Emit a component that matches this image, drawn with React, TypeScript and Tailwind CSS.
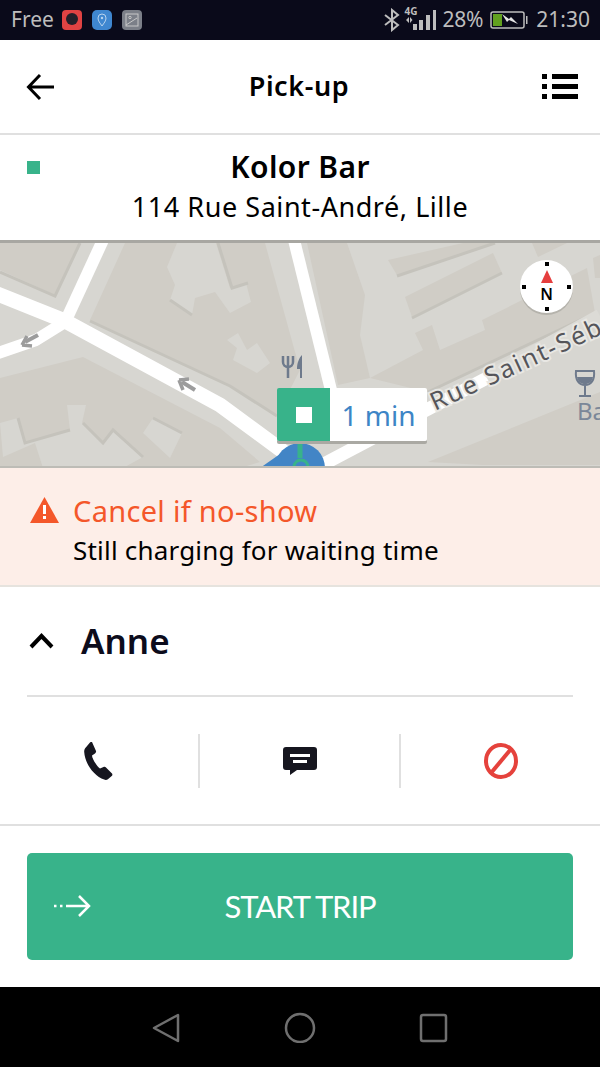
function StatusBar() {
  return (
    <div className="h-10 bg-[#0a0a1a] flex items-center justify-between pl-[11px] pr-[10px] text-[#bdbdbd] text-[21px] font-['Noto_Sans',sans-serif]">
      <div className="flex items-center">
        <span className="w-[42px]">Free</span>
        <svg width="20" height="20" viewBox="0 0 20 20" className="ml-[9px]">
          <rect width="20" height="20" rx="4" fill="#e04343" />
          <circle cx="10" cy="9" r="6" fill="#23202a" />
        </svg>
        <svg width="20" height="20" viewBox="0 0 20 20" className="ml-[10px]">
          <rect width="20" height="20" rx="5" fill="#3f87d0" />
          <path d="M10 16c-2-3-4-5-4-8a4 4 0 0 1 8 0c0 3-2 5-4 8z" fill="none" stroke="#b9d4ee" strokeWidth="1" />
          <circle cx="10" cy="8" r="1.2" fill="#b9d4ee" />
        </svg>
        <svg width="20" height="20" viewBox="0 0 20 20" className="ml-[10px]">
          <rect width="20" height="20" rx="4" fill="#7b7f88" />
          <rect x="4" y="4" width="12" height="12" fill="none" stroke="#c8c8c8" strokeWidth="1" />
          <path d="M4 15L15 8" stroke="#c8c8c8" strokeWidth="1" />
          <circle cx="8" cy="7.5" r="1.2" fill="none" stroke="#c8c8c8" />
        </svg>
      </div>
      <div className="flex items-center">
        <svg width="16" height="24" viewBox="0 0 16 24" fill="none" stroke="#bdbdbd" strokeWidth="2">
          <path d="M1 7l13 10-6 5V2l6 5L1 17" />
        </svg>
        <div className="relative w-[32px] h-[24px] ml-[4px]">
          <span className="absolute left-0 -top-[2px] text-[10px] font-bold leading-[11px]">4G</span>
          <svg width="32" height="24" viewBox="0 0 32 24" fill="#bdbdbd" className="absolute inset-0">
            <path d="M5 9l-3 3 3 3zM6 9v6l2.500-3zM9 16h4v6H9zM15 12h4v10h-4zM22 7h4v15h-4zM29 2h3v20h-3z" />
          </svg>
        </div>
        <span className="ml-[6px] tracking-[-0.2px]">28%</span>
        <svg width="38" height="20" viewBox="0 0 38 20" className="ml-[7px]">
          <rect x="1" y="2" width="33" height="16" rx="2" fill="none" stroke="#bdbdbd" strokeWidth="1.5" />
          <rect x="36" y="6" width="1.5" height="8" fill="#bdbdbd" />
          <rect x="3" y="4" width="9" height="12" fill="#62a11f" />
          <path d="M12 4l7 5 2-2 7 7-9-4-2 2z" fill="#e5e5e5" />
        </svg>
        <span className="ml-[8px]">21:30</span>
      </div>
    </div>
  );
}

function MapArea() {
  return (
    <div className="relative h-[228px] bg-[#d7d6d1] overflow-hidden">
      <svg width="600" height="228" viewBox="0 0 600 228" className="absolute inset-0">
        {/* darker blocks */}
        <g fill="#d0cdc6">
          <path d="M0 3h80L55 55 0 30z" />
          <path d="M125 3L90 80l140 65 47 30 23-45-35-127z" />
          <path d="M0 138l83-21 137 71 40 34-20 6H0z" />
          <path d="M307 3h40l18 52-5 40 10 43-32 7z" />
          <path d="M388 20l75-17h32L397 35z" />
          <path d="M405 57l88-44 9 20-90 44z" />
          <path d="M415 93l17-8 8 25 45-20-3-10 105-52 8 45-168 79-57-14 53-28z" />
          <path d="M428 222l172-70v73H483z" />
          <path d="M593 18l7-3v23h-5z" />
          <path d="M532 3h35l-29 14z" />
        </g>
        {/* lighter buildings */}
        <g fill="#d7d6d1">
          <path d="M177 3l-10 24 8 18-5 15 22 15 3-17 20-6 15 21 21-11-5-19-16 5-14-45z" />
          <path d="M227 100l11-7 9 17 10-7 13 20-13 10-24-13 4-12z" />
          <path d="M0 183l18-5 7 25 45-13-3-25h19l-4 18 21 20 10-13 30 27-20 11H43l-8-25-32 14z" />
          <path d="M143 193l10-15 29 15-12 25z" />
        </g>
        {/* building shadows */}
        <g fill="none" stroke="#c5c3bc" strokeWidth="3">
          <path d="M0 32l55 24L80 3" />
          <path d="M90 81l140 65 47 30" />
          <path d="M18 178l7 25 45-13" />
          <path d="M83 183l20 20 10-13 30 27" />
          <path d="M153 178l29 15" />
          <path d="M397 36l98-33" />
          <path d="M412 78l90-45" />
          <path d="M218 3l14 45 16-5" />
          <path d="M170 60l22 15" />
          <path d="M428 152l167-79" />
        </g>
        {/* roads */}
        <g fill="none" stroke="#ffffff" strokeLinejoin="round">
          <path d="M-5 53L65 81 220 165 292 218" strokeWidth="15" />
          <path d="M67 78L103 0" strokeWidth="12" />
          <path d="M65 82L36 100-5 114" strokeWidth="12" />
          <path d="M294 0L331 150" strokeWidth="12" />
          <path d="M600 76L487 138" strokeWidth="14" stroke="#dcdbd6" />
          <path d="M320 226L487 138" strokeWidth="13" />
        </g>
        {/* one-way arrows */}
        <g fill="none" stroke="#9c9c9c" strokeWidth="4">
          <path d="M38 95L25 102" />
          <path d="M22 105l10 1M22 105l5-9" strokeWidth="3.5" />
          <path d="M195 150l-13-8" />
          <path d="M179 140l4 10M179 140l10-1" strokeWidth="3.5" />
        </g>
        {/* restaurant */}
        <g fill="none" stroke="#6e7a8c" strokeWidth="2.5">
          <path d="M288 116v22M283 116v6a5 5 0 0 0 10 0v-6" />
        </g>
        <path d="M300 138v-9h-3c0-6 2-11 5-14v23z" fill="#6e7a8c" />
        {/* bar */}
        <g fill="none" stroke="#6e7a8c" strokeWidth="2">
          <path d="M576 131h18c1 9-3 14-9 14s-10-5-9-14zM585 145v11M579 156h12" />
        </g>
        <path d="M577 137h16c-1 5-4 7-8 7s-7-2-8-7z" fill="#6e7a8c" />
        <text x="577" y="180" fontSize="24" fill="#7b8798" fontFamily="'Noto Sans', sans-serif">Ba</text>
        <text
          x="435"
          y="171"
          fontSize="25"
          fill="#55555a"
          stroke="#e8e7e3"
          strokeWidth="4"
          paintOrder="stroke"
          letterSpacing="2"
          fontFamily="'Noto Sans', sans-serif"
          transform="rotate(-24.7 435 171)"
        >
          Rue Saint-Séb
        </text>
        {/* driver */}
        <circle cx="300" cy="228" r="25" fill="#4285c6" />
        <path d="M260 228l20-14 4 14z" fill="#4285c6" />
        <path d="M300 200v18" stroke="#38b38a" strokeWidth="5" />
        <circle cx="301" cy="227" r="7" fill="none" stroke="#38b38a" strokeWidth="3" />
      </svg>
      <div className="absolute inset-x-0 top-0 h-[3px] bg-[#a8a7a2]" />
      <div className="absolute inset-x-0 bottom-0 h-[2px] bg-[#bdbcb6]" />
      <div className="absolute left-[520px] top-[20px] w-[53px] h-[53px] rounded-full bg-white shadow-[0_2px_0_#b5b3ac]">
        <span className="absolute left-[25px] top-[2px] w-[4px] h-[4px] bg-black" />
        <span className="absolute left-[25px] bottom-[2px] w-[4px] h-[4px] bg-black" />
        <span className="absolute left-[2px] top-[25px] w-[4px] h-[4px] bg-black" />
        <span className="absolute right-[2px] top-[25px] w-[4px] h-[4px] bg-black" />
        <svg width="14" height="14" viewBox="0 0 14 14" className="absolute left-[20px] top-[10px]">
          <path d="M7 0l6 13H1z" fill="#e53e3e" />
        </svg>
        <span className="absolute left-0 right-0 top-[25px] text-center text-[16px] leading-[18px] font-semibold text-black font-['Noto_Sans',sans-serif]">N</span>
      </div>
      <div className="absolute left-[277px] top-[148px] flex h-[53px] rounded-[2px] shadow-[0_3px_0_#aaa9a3]">
        <div className="w-[53px] bg-[#38b38a] rounded-l-[2px] flex items-center justify-center">
          <div className="w-[16px] h-[16px] bg-white" />
        </div>
        <div className="w-[97px] bg-white rounded-r-[2px] flex items-center justify-center text-[28px] text-[#3d85c6] font-['Noto_Sans',sans-serif]">
          1 min
        </div>
      </div>
    </div>
  );
}

export default function App() {
  return (
    <div className="w-[600px] h-[1067px] bg-white flex flex-col overflow-hidden font-['Noto_Sans',sans-serif] text-[#0c0c1c]">
      <StatusBar />

      <div className="h-[95px] flex items-center justify-between pl-[26px] pr-[22px] border-b-2 border-[#e0e0e0]">
        <svg width="30" height="28" viewBox="0 0 30 28" fill="none" stroke="#000" strokeWidth="3">
          <path d="M28 14H3M14 2L2.500 14 14 26" />
        </svg>
        <span className="text-[27px] tracking-[0.6px] font-semibold text-black">Pick-up</span>
        <svg width="36" height="25" viewBox="0 0 36 25" fill="#000">
          <rect x="0" y="0" width="5" height="5" />
          <rect x="10" y="0" width="26" height="5" />
          <rect x="0" y="10" width="5" height="5" />
          <rect x="10" y="10" width="26" height="5" />
          <rect x="0" y="20" width="5" height="5" />
          <rect x="10" y="20" width="26" height="5" />
        </svg>
      </div>

      <div className="relative h-[105px] flex flex-col items-center pt-[11px]">
        <span className="absolute left-[27px] top-[26px] w-[13px] h-[13px] bg-[#38b38a]" />
        <span className="text-[30px] leading-[42px] tracking-[0.4px] font-semibold text-black">Kolor Bar</span>
        <span className="text-[27px] leading-[38px] tracking-[0.55px] text-black">114 Rue Saint-André, Lille</span>
      </div>

      <MapArea />

      <div className="h-[119px] bg-[#fdeee8] border-b-2 border-[#e6e3de] pl-[30px] flex items-center gap-[15px]">
        <svg width="29" height="26" viewBox="0 0 29 26" className="-mt-[34px]">
          <path d="M14.5 0L29 26H0z" fill="#f4572a" />
          <rect x="13" y="8" width="3" height="9" fill="#fff" />
          <rect x="13" y="19" width="3" height="3" fill="#fff" />
        </svg>
        <div className="flex flex-col pt-[4px] -ml-[1px]">
          <span className="text-[29px] leading-[42px] tracking-[0.3px] text-[#f4572a]">Cancel if no-show</span>
          <span className="text-[26px] leading-[36px] tracking-[0.2px] text-black">Still charging for waiting time</span>
        </div>
      </div>

      <div className="h-[110px] mx-[27px] flex items-center gap-[26px] border-b-2 border-[#e0e0e0]">
        <svg width="27" height="18" viewBox="0 0 27 18" fill="none" stroke="#000" strokeWidth="4" className="ml-px">
          <path d="M3 15L13.500 4 24 15" />
        </svg>
        <span className="text-[35px] font-semibold text-[#0c0c1c]">Anne</span>
      </div>

      <div className="h-[129px] flex items-start pt-[37px] border-b-2 border-[#e0e0e0]">
        <div className="w-[200px] h-[54px] flex items-center justify-center border-r-2 border-[#e0e0e0]">
          <svg width="32" height="38" viewBox="0 0 32 38" fill="#16161f">
            <path d="M9 0l4 9c.3 1-.2 2-1 2.500l-3 2c0 3 5 11 8 13l3.500-1.500c1-.4 2-.2 2.500.6l6 6c.6.8.5 1.700-.3 2.400l-3.500 3c-1 .8-2.500 1.200-4 .6C11 34 2 22 1.200 10c-.2-2 .6-3.500 2-5L7 .5c.6-.6 1.600-1 2-.5z" />
          </svg>
        </div>
        <div className="w-[201px] h-[54px] flex items-center justify-center border-r-2 border-[#e0e0e0]">
          <svg width="34" height="28" viewBox="0 0 34 28">
            <path d="M3 0h28a3 3 0 0 1 3 3v17a3 3 0 0 1-3 3H14l-7 5v-5H3a3 3 0 0 1-3-3V3a3 3 0 0 1 3-3z" fill="#16161f" />
            <rect x="7" y="7" width="20" height="3" fill="#fff" />
            <rect x="10" y="13" width="14" height="3" fill="#fff" />
          </svg>
        </div>
        <div className="flex-1 h-[54px] flex items-center justify-center">
          <svg width="36" height="38" viewBox="0 0 36 38" fill="none" stroke="#e5423c" strokeWidth="4">
            <ellipse cx="18" cy="19" rx="15" ry="16" />
            <path d="M28 7L8 31" />
          </svg>
        </div>
      </div>

      <div className="h-[161px] px-[27px] pt-[27px] bg-white">
        <div className="relative h-[107px] bg-[#38b38a] rounded-[5px] flex items-center justify-center text-white text-[31px] tracking-[-1.1px] font-['Lato',sans-serif]">
          <svg width="38" height="24" viewBox="0 0 38 24" fill="none" stroke="#fff" strokeWidth="2.500" className="absolute left-[26px] top-[41px]">
            <path d="M13 12h23M26 2l10 10-10 10" />
            <path d="M1 12h2.500M7 12h2.500" />
          </svg>
          START TRIP
        </div>
      </div>

      <div className="flex-1 bg-black flex items-center justify-center">
        <svg width="300" height="32" viewBox="0 0 300 32" fill="none" stroke="#6f6f6f" strokeWidth="2.500" strokeLinejoin="round">
          <path d="M28 4v26L4 17z" />
          <circle cx="150" cy="17" r="14" />
          <rect x="271" y="4" width="25" height="26" rx="2" />
        </svg>
      </div>
    </div>
  );
}
